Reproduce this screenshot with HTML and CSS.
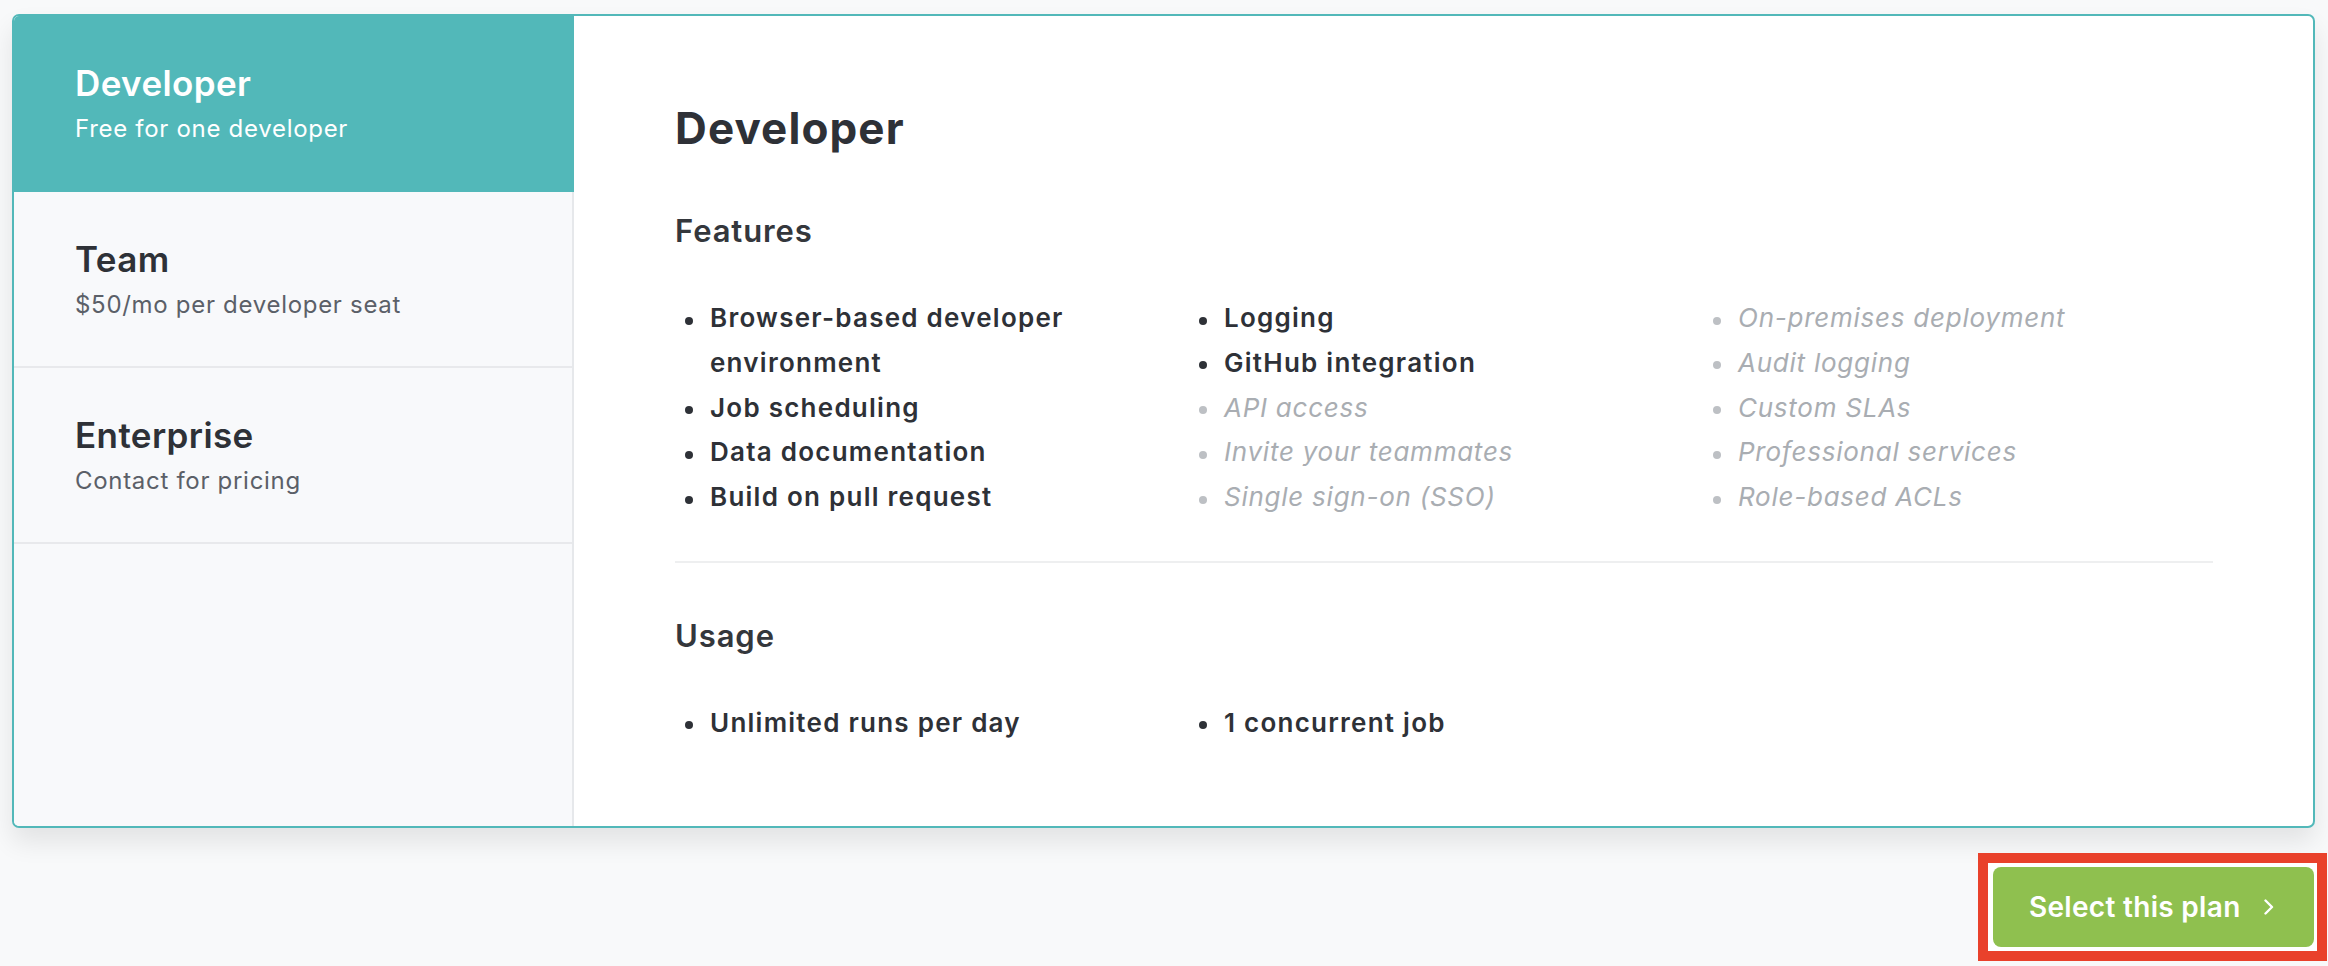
FILE: index.html
```html
<!DOCTYPE html>
<html lang="en">
<head>
<meta charset="utf-8">
<title>Select a plan</title>
<link rel="stylesheet" href="styles.css">
</head>
<body>
<div class="page">
  <div class="card">
    <aside class="plans">
      <div class="plan active">
        <div class="plan-name">Developer</div>
        <div class="plan-price">Free for one developer</div>
      </div>
      <div class="plan">
        <div class="plan-name">Team</div>
        <div class="plan-price">$50/mo per developer seat</div>
      </div>
      <div class="plan">
        <div class="plan-name">Enterprise</div>
        <div class="plan-price">Contact for pricing</div>
      </div>
    </aside>
    <main class="details">
      <h1 class="details-title">Developer</h1>
      <section class="group">
        <h2 class="group-title">Features</h2>
        <div class="cols">
          <ul class="list">
            <li class="on">Browser-based developer environment</li>
            <li class="on">Job scheduling</li>
            <li class="on">Data documentation</li>
            <li class="on">Build on pull request</li>
          </ul>
          <ul class="list">
            <li class="on">Logging</li>
            <li class="on">GitHub integration</li>
            <li class="off">API access</li>
            <li class="off">Invite your teammates</li>
            <li class="off">Single sign-on (SSO)</li>
          </ul>
          <ul class="list">
            <li class="off">On-premises deployment</li>
            <li class="off">Audit logging</li>
            <li class="off">Custom SLAs</li>
            <li class="off">Professional services</li>
            <li class="off">Role-based ACLs</li>
          </ul>
        </div>
      </section>
      <hr class="divider">
      <section class="group usage">
        <h2 class="group-title">Usage</h2>
        <div class="cols">
          <ul class="list">
            <li class="on">Unlimited runs per day</li>
          </ul>
          <ul class="list">
            <li class="on">1 concurrent job</li>
          </ul>
          <ul class="list"></ul>
        </div>
      </section>
    </main>
  </div>
  <div class="actions">
    <div class="highlight">
      <button class="select-btn" type="button">
        <span>Select this plan</span>
        <svg class="chev" width="12" height="16" viewBox="0 0 12 16" aria-hidden="true"><polyline points="2.5,1.5 9,8 2.5,14.5" fill="none" stroke="#ffffff" stroke-width="2.4" stroke-linecap="round" stroke-linejoin="round"/></svg>
      </button>
    </div>
  </div>
</div>
</body>
</html>
```
FILE: styles.css
```css
* { box-sizing: border-box; }
html, body {
  margin: 0;
  padding: 0;
  background: #f8f9fa;
  font-family: Inter, "Noto Sans", "Liberation Sans", sans-serif;
  color: #2e3137;
}
.page {
  padding: 14px 13px 0 12px;
  min-height: 966px;
}
.card {
  display: flex;
  border: 2px solid #52b8b9;
  border-radius: 7px;
  background: #ffffff;
  overflow: hidden;
  box-shadow: 0 14px 26px rgba(0, 0, 0, 0.09);
}
.plans {
  width: 560px;
  flex: 0 0 560px;
  display: flex;
  flex-direction: column;
  background: #f8f9fb;
  border-right: 2px solid #e6e8eb;
}
.plan {
  height: 176px;
  padding: 45px 40px 0 61px;
  border-bottom: 2px solid #e8e9ec;
}
.plan.active {
  background: #52b8b9;
  border-bottom-color: #52b8b9;
  margin-right: -2px;
}
.plan-name {
  font-size: 35px;
  line-height: 44px;
  font-weight: 600;
  letter-spacing: 0.4px;
  color: #2e3137;
}
.plan-price {
  margin-top: 8px;
  font-size: 24px;
  line-height: 32px;
  letter-spacing: 0.7px;
  color: #5b6068;
}
.plan.active .plan-name,
.plan.active .plan-price {
  color: #ffffff;
}
.details {
  flex: 1;
  padding: 85px 100px 80px 101px;
}
.details-title {
  margin: 0;
  font-size: 44px;
  line-height: 54px;
  font-weight: 700;
  letter-spacing: 1.1px;
  color: #2e3137;
}
.group-title {
  margin: 56px 0 0;
  font-size: 31px;
  line-height: 40px;
  font-weight: 600;
  letter-spacing: 0.9px;
  color: #34373c;
}
.usage .group-title { margin-top: 53px; }
.cols {
  display: grid;
  grid-template-columns: 514px 514px 1fr;
  margin-top: 45px;
}
.list {
  list-style: none;
  margin: 0;
  padding: 0 20px 0 0;
}
.list li {
  display: flex;
  align-items: flex-start;
  font-size: 26px;
  line-height: 44.8px;
}
.list li::before {
  content: "";
  flex: 0 0 8px;
  width: 8px;
  height: 8px;
  margin: 20.5px 17.5px 0 9.5px;
  border-radius: 50%;
}
.list li.on {
  font-weight: 600;
  letter-spacing: 1.25px;
  color: #2e3137;
}
.list li.on::before { background: #2e3137; }
.list li.off {
  font-style: italic;
  letter-spacing: 0.75px;
  color: #a9adb2;
}
.list li.off::before { background: #bdc0c4; }
.divider {
  margin: 41px 0 0;
  border: 0;
  height: 2px;
  background: #eeeff0;
}
.actions {
  display: flex;
  justify-content: flex-end;
  margin-top: 25px;
  margin-right: -12px;
}
.highlight {
  border: 10px solid #e9412b;
  padding: 4px 3px 4px 5px;
  background: #ffffff;
}
.select-btn {
  display: flex;
  align-items: center;
  gap: 22px;
  width: 321px;
  height: 80px;
  padding: 0 0 0 36px;
  border: 0;
  border-radius: 8px;
  background: #8fc04f;
  color: #ffffff;
  font-family: Inter, "Noto Sans", "Liberation Sans", sans-serif;
  font-size: 28px;
  font-weight: 600;
  letter-spacing: 0.3px;
  cursor: pointer;
}
.chev { display: block; }
```
